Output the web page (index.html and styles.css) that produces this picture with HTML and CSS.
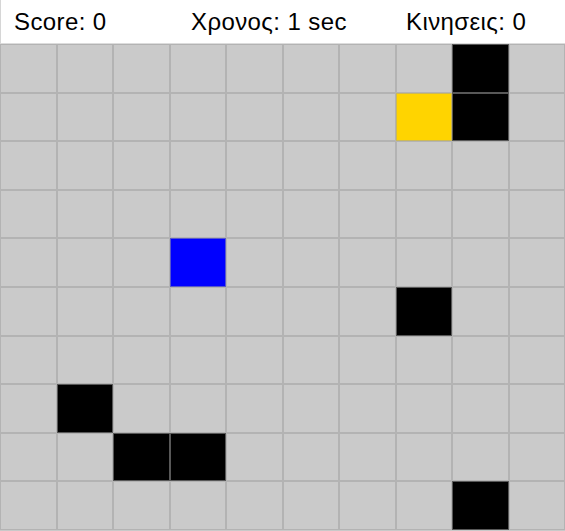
FILE: index.html
```html
<!DOCTYPE html>
<html>
<head>
    <title>Παιχνίδι</title>
    <link rel="stylesheet" href="styles.css">
</head>
<body>

<div id="topBar">
    <span id="score">Score: 0</span>
    <span id="timer">Χρονος: 1 sec</span>
    <span id="moves">Κινησεις: 0</span>
</div>

<div id="board"></div>

<script>
// Board size
const COLS = 10;
const ROWS = 10;

// Cells that are not empty: [col, row, type]
const pieces = [
    [8, 0, 'wall'],
    [7, 1, 'goal'],
    [8, 1, 'wall'],
    [3, 4, 'player'],
    [7, 5, 'wall'],
    [1, 7, 'wall'],
    [2, 8, 'wall'],
    [3, 8, 'wall'],
    [8, 9, 'wall']
];

// Draw the board
function renderBoard() {
    const board = document.getElementById('board');
    board.innerHTML = '';
    for (let row = 0; row < ROWS; row++) {
        for (let col = 0; col < COLS; col++) {
            const cell = document.createElement('div');
            cell.className = 'cell';
            pieces.forEach((piece) => {
                if (piece[0] === col && piece[1] === row) {
                    cell.classList.add(piece[2]);
                }
            });
            board.appendChild(cell);
        }
    }
}

renderBoard();
</script>

</body>
</html>
```

FILE: styles.css
```css
html, body {
    margin: 0;
    padding: 0;
    overflow: hidden;
}
body {
    font-family: "Liberation Sans", Arial, sans-serif;
    background: #c9c9c9;
}
#topBar {
    display: grid;
    grid-template-columns: 177px 215px 1fr;
    height: 44px;
    align-items: center;
    padding-left: 13px;
    padding-top: 1px;
    background: #fff;
    border-left: 1px solid #d6d6d6;
    border-bottom: 1px solid #dcdcdc;
    font-size: 24px;
    letter-spacing: 0.4px;
    color: #000;
    box-sizing: border-box;
}
#board {
    display: grid;
    grid-template-columns: repeat(10, 1fr);
    grid-auto-rows: 48.6px;
}
.cell {
    background: #cacaca;
    border: 1px solid rgba(160, 160, 160, 0.55);
}
.wall {
    background: #000;
}
.goal {
    background: #ffd400;
}
.player {
    background: #0000ff;
}
```
